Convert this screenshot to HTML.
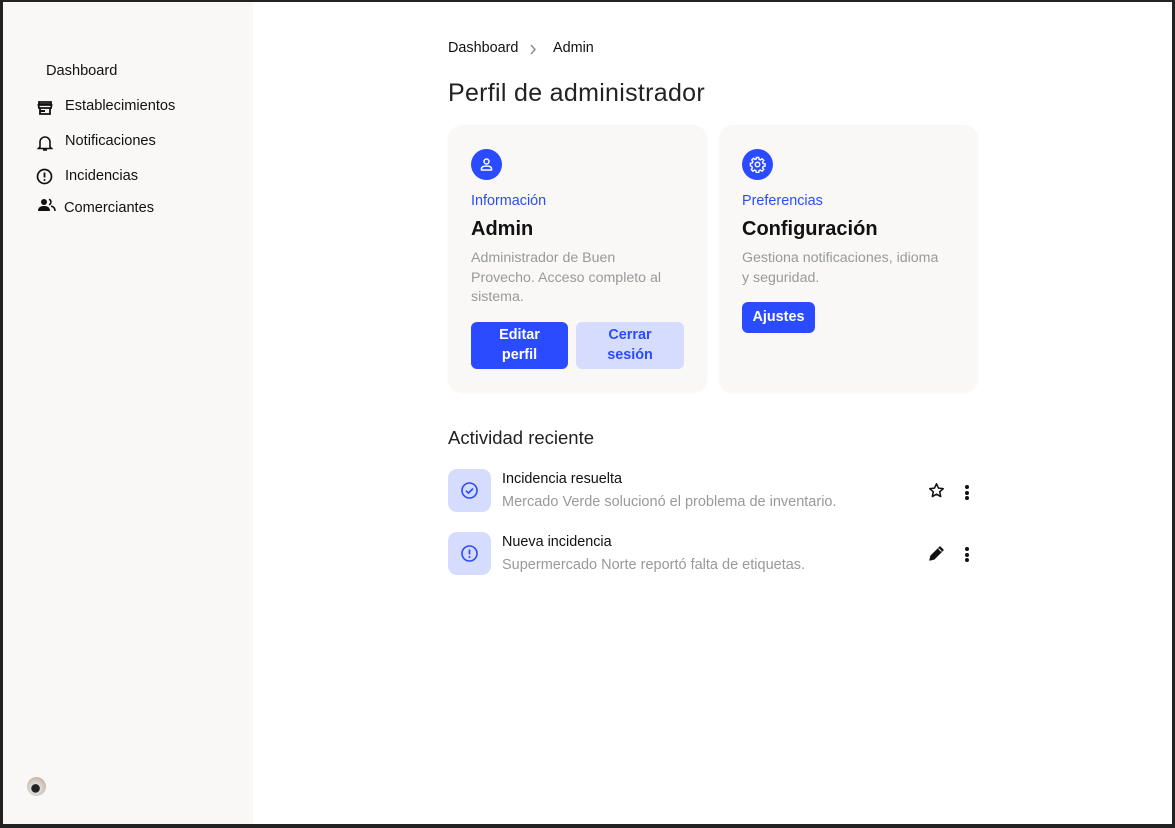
<!DOCTYPE html>
<html><head><meta charset="utf-8"><style>
*{box-sizing:border-box;margin:0;padding:0}
body{width:1175px;height:828px;background:#222;font-family:"Liberation Sans",sans-serif;color:#111;overflow:hidden;position:relative}
#f{position:absolute;left:3px;top:2px;width:1169px;height:822px;background:#fff;overflow:hidden}
#sb{position:absolute;left:0;top:0;width:250px;height:822px;background:#f9f8f7}
.nav{position:absolute;font-size:14.6px;color:#111}
.ic{position:absolute}
.t{position:absolute;white-space:nowrap}
.card{position:absolute;top:123px;width:259px;height:267px;background:#f9f8f7;border-radius:14px;box-shadow:0 1px 2px rgba(0,0,0,.04)}
.circ{position:absolute;left:23px;top:24px;width:31px;height:31px;border-radius:50%;background:#2a4bff}
.lab{position:absolute;left:23px;top:68px;font-size:14.4px;color:#2a4bff}
.h{position:absolute;left:23px;top:93px;font-size:20px;font-weight:bold;color:#111}
.d{position:absolute;left:23px;top:124px;font-size:14.2px;line-height:19.5px;color:#999;white-space:nowrap}
.btn{position:absolute;border-radius:6px;font-size:14.4px;font-weight:bold;text-align:center;line-height:19.5px}
.sq{position:absolute;left:445px;width:43px;height:43px;border-radius:9px;background:#d6dcfd}
.at{position:absolute;left:499px;font-size:14.4px;color:#111}
.as{position:absolute;left:499px;font-size:14.5px;color:#999}
.dots{position:absolute;width:4px}
.dots i{display:block;width:4px;height:4px;border-radius:50%;background:#111;margin-bottom:1.5px}
</style></head><body><div id="f">
<div id="sb">
<div class="nav" style="left:43px;top:61px">Dashboard</div>
<svg class="ic" style="left:34px;top:98px" width="16" height="16" viewBox="0 0 16 16"><path d="M2 2h12v2H2zM1.5 5h13l-.5 3H2zM3 8v6h10V8" fill="none" stroke="#111" stroke-width="1.8"/><rect x="3" y="10" width="5" height="2" fill="#111"/></svg>
<div class="nav" style="left:62px;top:96px">Establecimientos</div>
<svg class="ic" style="left:34px;top:132px" width="16" height="18" viewBox="0 0 16 18"><path d="M3 13V8a5 5 0 0 1 10 0v5l1.5 1.5h-13z M6 16h4" fill="none" stroke="#111" stroke-width="1.6"/></svg>
<div class="nav" style="left:62px;top:131px">Notificaciones</div>
<svg class="ic" style="left:33px;top:166px" width="17" height="17" viewBox="0 0 17 17"><circle cx="8.5" cy="8.5" r="7" fill="none" stroke="#111" stroke-width="1.7"/><path d="M8.5 4.5v5" stroke="#111" stroke-width="1.8"/><circle cx="8.5" cy="12" r="1" fill="#111"/></svg>
<div class="nav" style="left:62px;top:166px">Incidencias</div>
<svg class="ic" style="left:35px;top:196px" width="18" height="14" viewBox="0 0 18 14"><circle cx="6" cy="4" r="3" fill="#111"/><path d="M0 13c0-4 3-5 6-5s6 1 6 5z" fill="#111"/><path d="M11 1.2a3 3 0 0 1 0 5.6M13 8c2 .5 4 1.5 4 5" fill="none" stroke="#111" stroke-width="1.6"/></svg>
<div class="nav" style="left:61px;top:198px">Comerciantes</div>
<div style="position:absolute;left:24px;top:775px;width:19px;height:19px;border-radius:50%;background:radial-gradient(circle at 45% 60%,#222 0 25%,#ddd 30%,#c9b9a8 70%)"></div>
</div>
<div class="t" style="left:445px;top:38px;font-size:14.4px">Dashboard</div>
<svg class="ic" style="left:526px;top:42px" width="8" height="11" viewBox="0 0 8 11"><path d="M2 1l4 4.5L2 10" fill="none" stroke="#888" stroke-width="1.4"/></svg>
<div class="t" style="left:550px;top:38px;font-size:14.4px">Admin</div>
<div class="t" style="left:445px;top:77px;font-size:25px;letter-spacing:.3px;color:#222">Perfil de administrador</div>

<div class="card" style="left:445px">
<div class="circ"><svg style="position:absolute;left:8px;top:8px" width="15" height="15" viewBox="0 0 15 15"><circle cx="7.5" cy="4.5" r="2.5" fill="none" stroke="#fff" stroke-width="1.5"/><path d="M2.5 13v-1.5c0-1.5 2-2.5 5-2.5s5 1 5 2.5V13z" fill="none" stroke="#fff" stroke-width="1.5"/></svg></div>
<div class="lab">Información</div>
<div class="h">Admin</div>
<div class="d">Administrador de Buen<br>Provecho. Acceso completo al<br>sistema.</div>
<div class="btn" style="left:23px;top:197px;width:97px;height:47px;background:#2a4bff;color:#fff;padding-top:4px">Editar<br>perfil</div>
<div class="btn" style="left:128px;top:197px;width:108px;height:47px;background:#d6dcfd;color:#2a4bff;padding-top:4px">Cerrar<br>sesión</div>
</div>

<div class="card" style="left:716px">
<div class="circ"><svg style="position:absolute;left:7px;top:7px" width="17" height="17" viewBox="0 0 24 24"><path d="M10.3 2h3.4l.5 2.7 1.9.8 2.3-1.6 2.4 2.4-1.6 2.3.8 1.9 2.7.5v3.4l-2.7.5-.8 1.9 1.6 2.3-2.4 2.4-2.3-1.6-1.9.8-.5 2.7h-3.4l-.5-2.7-1.9-.8-2.3 1.6-2.4-2.4 1.6-2.3-.8-1.9L2 13.7v-3.4l2.7-.5.8-1.9-1.6-2.3 2.4-2.4 2.3 1.6 1.9-.8z" fill="none" stroke="#fff" stroke-width="2"/><circle cx="12" cy="12" r="3.2" fill="none" stroke="#fff" stroke-width="2"/></svg></div>
<div class="lab">Preferencias</div>
<div class="h">Configuración</div>
<div class="d">Gestiona notificaciones, idioma<br>y seguridad.</div>
<div class="btn" style="left:23px;top:177px;width:73px;height:31px;background:#2a4bff;color:#fff;line-height:31px">Ajustes</div>
</div>

<div class="t" style="left:445px;top:425px;font-size:18.5px;color:#222">Actividad reciente</div>

<div class="sq" style="top:467px"><svg style="position:absolute;left:12px;top:12px" width="19" height="19" viewBox="0 0 19 19"><circle cx="9.5" cy="9.5" r="7.5" fill="none" stroke="#2a4bff" stroke-width="1.6"/><path d="M6 9.7l2.4 2.4 4.6-4.6" fill="none" stroke="#2a4bff" stroke-width="1.6"/></svg></div>
<div class="at" style="top:469px">Incidencia resuelta</div>
<div class="as" style="top:492px">Mercado Verde solucionó el problema de inventario.</div>
<svg class="ic" style="left:925px;top:480px" width="17" height="17" viewBox="0 0 24 24"><path d="M12 2.5l2.9 6.2 6.6.7-5 4.5 1.4 6.6L12 17.2l-5.9 3.3 1.4-6.6-5-4.5 6.6-.7z" fill="none" stroke="#111" stroke-width="2.2" stroke-linejoin="round"/></svg>
<div class="dots" style="left:962px;top:483px"><i></i><i></i><i></i></div>

<div class="sq" style="top:530px"><svg style="position:absolute;left:12px;top:12px" width="19" height="19" viewBox="0 0 19 19"><circle cx="9.5" cy="9.5" r="7.5" fill="none" stroke="#2a4bff" stroke-width="1.6"/><path d="M9.5 5.5v5" stroke="#2a4bff" stroke-width="1.7"/><circle cx="9.5" cy="13" r="1" fill="#2a4bff"/></svg></div>
<div class="at" style="top:532px">Nueva incidencia</div>
<div class="as" style="top:555px">Supermercado Norte reportó falta de etiquetas.</div>
<svg class="ic" style="left:926px;top:543px" width="16" height="16" viewBox="0 0 16 16"><path d="M1 15l1-4L11 2l3 3-9 9z" fill="#111" stroke="#111" stroke-width="1.4" stroke-linejoin="round"/><path d="M9.5 3.5l3 3" stroke="#fff" stroke-width="1"/></svg>
<div class="dots" style="left:962px;top:545px"><i></i><i></i><i></i></div>
</div></body></html>
